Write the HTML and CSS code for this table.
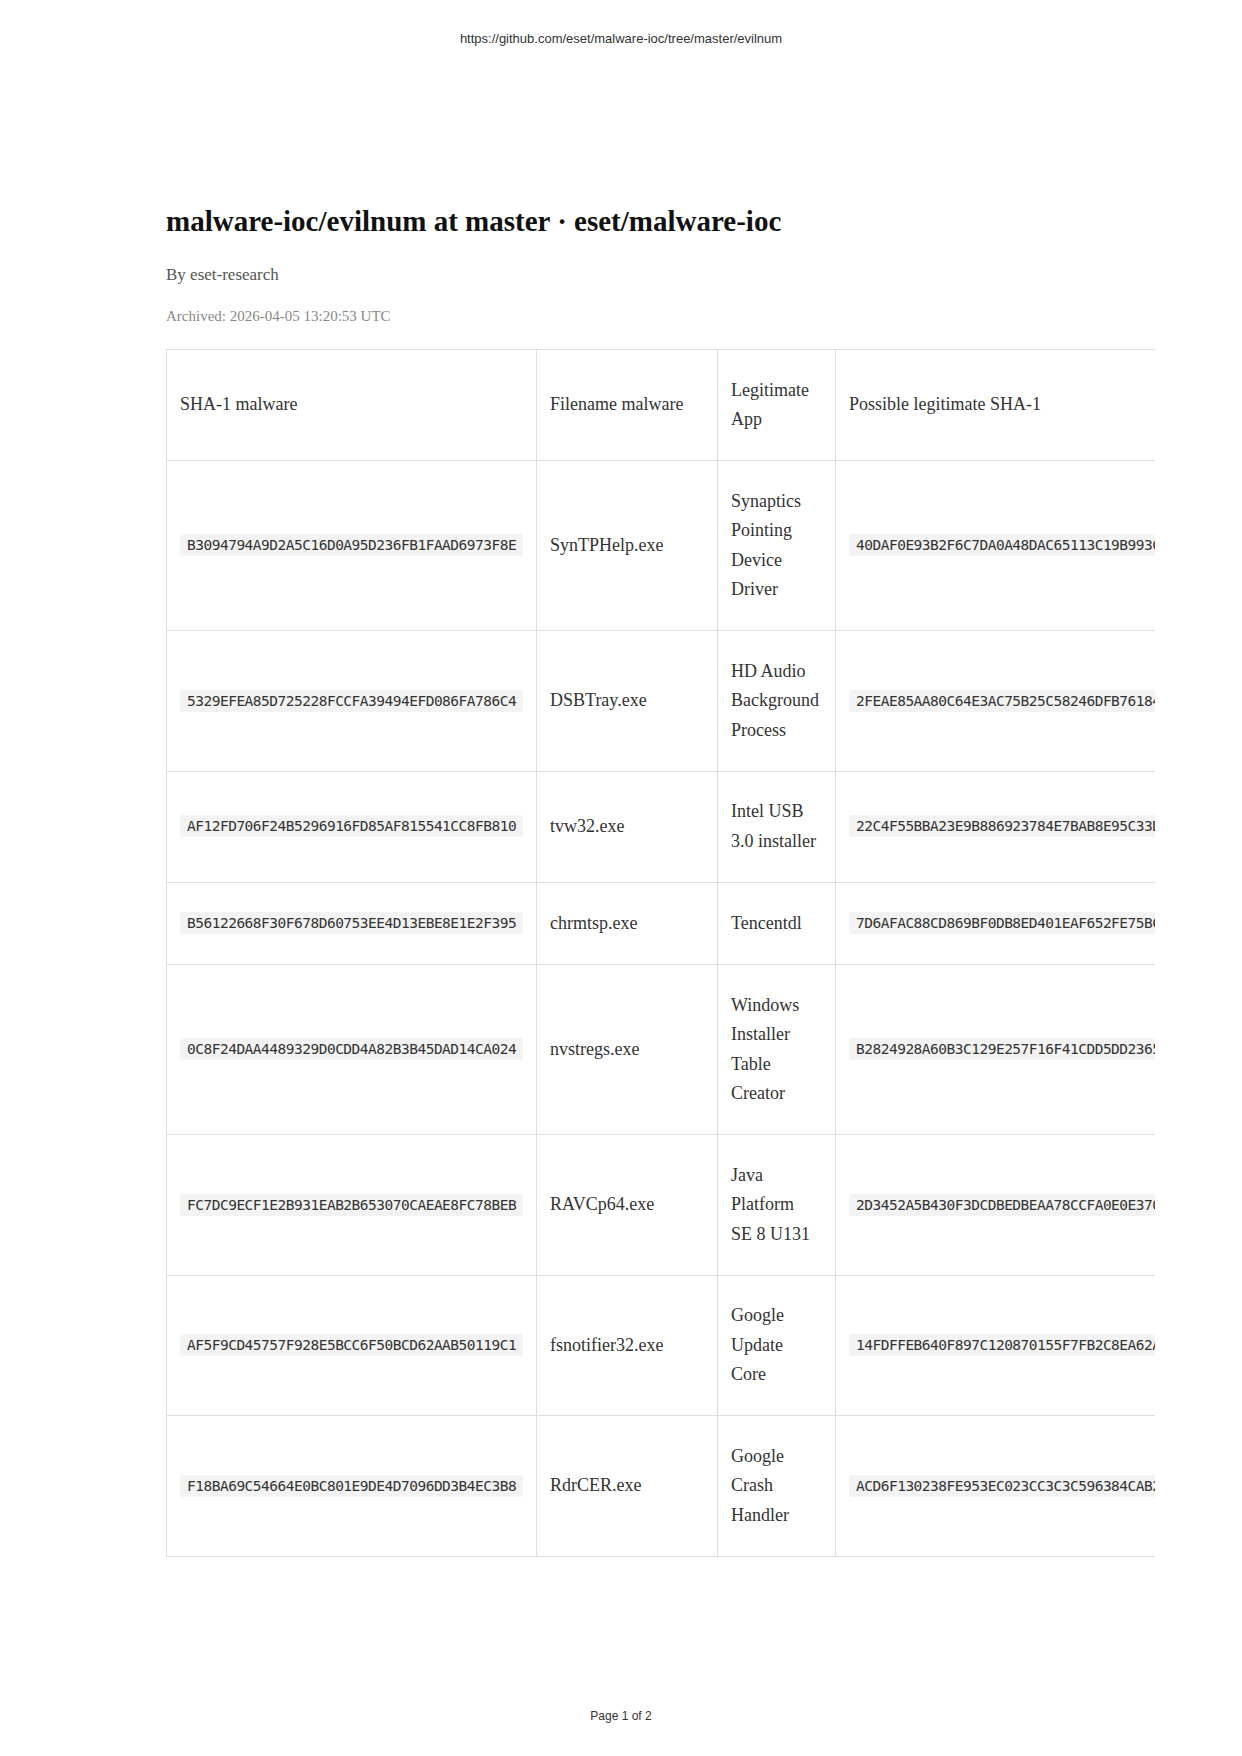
FILE: index.html
```html
<!DOCTYPE html>
<html lang="en">
<head>
<meta charset="utf-8">
<title>malware-ioc/evilnum at master · eset/malware-ioc</title>
<link rel="stylesheet" href="styles.css">
</head>
<body>
<header class="print-header">https://github.com/eset/malware-ioc/tree/master/evilnum</header>
<main class="content">
  <h1 class="title">malware-ioc/evilnum at master · eset/malware-ioc</h1>
  <p class="byline">By eset-research</p>
  <p class="archived">Archived: 2026-04-05 13:20:53 UTC</p>
  <div class="table-clip">
    <table class="ioc-table">
      <colgroup>
        <col class="c1"><col class="c2"><col class="c3"><col class="c4">
      </colgroup>
      <thead>
        <tr><th>SHA-1 malware</th><th>Filename malware</th><th class="app">Legitimate App</th><th>Possible legitimate SHA-1</th></tr>
      </thead>
      <tbody>
        <tr><td><code>B3094794A9D2A5C16D0A95D236FB1FAAD6973F8E</code></td><td>SynTPHelp.exe</td><td class="app">Synaptics Pointing Device Driver</td><td><code>40DAF0E93B2F6C7DA0A48DAC65113C19B993C0A1</code></td></tr>
        <tr><td><code>5329EFEA85D725228FCCFA39494EFD086FA786C4</code></td><td>DSBTray.exe</td><td class="app">HD Audio Background Process</td><td><code>2FEAE85AA80C64E3AC75B25C58246DFB76184E37</code></td></tr>
        <tr><td><code>AF12FD706F24B5296916FD85AF815541CC8FB810</code></td><td>tvw32.exe</td><td class="app">Intel USB 3.0 installer</td><td><code>22C4F55BBA23E9B886923784E7BAB8E95C33D5C1</code></td></tr>
        <tr><td><code>B56122668F30F678D60753EE4D13EBE8E1E2F395</code></td><td>chrmtsp.exe</td><td class="app">Tencentdl</td><td><code>7D6AFAC88CD869BF0DB8ED401EAF652FE75BC9F2</code></td></tr>
        <tr><td><code>0C8F24DAA4489329D0CDD4A82B3B45DAD14CA024</code></td><td>nvstregs.exe</td><td class="app">Windows Installer Table Creator</td><td><code>B2824928A60B3C129E257F16F41CDD5DD2365A07</code></td></tr>
        <tr><td><code>FC7DC9ECF1E2B931EAB2B653070CAEAE8FC78BEB</code></td><td>RAVCp64.exe</td><td class="app">Java Platform SE 8 U131</td><td><code>2D3452A5B430F3DCDBEDBEAA78CCFA0E0E370B4D</code></td></tr>
        <tr><td><code>AF5F9CD45757F928E5BCC6F50BCD62AAB50119C1</code></td><td>fsnotifier32.exe</td><td class="app">Google Update Core</td><td><code>14FDFFEB640F897C120870155F7FB2C8EA62A3E6</code></td></tr>
        <tr><td><code>F18BA69C54664E0BC801E9DE4D7096DD3B4EC3B8</code></td><td>RdrCER.exe</td><td class="app">Google Crash Handler</td><td><code>ACD6F130238FE953EC023CC3C3C596384CAB2F90</code></td></tr>
      </tbody>
    </table>
  </div>
</main>
<footer class="print-footer">Page 1 of 2</footer>
</body>
</html>
```
FILE: styles.css
```css
html, body {
  margin: 0;
  padding: 0;
  background: #fff;
}
body {
  min-height: 1756px;
  display: flex;
  flex-direction: column;
  font-family: "Liberation Serif", "Times New Roman", serif;
  color: #333;
}
.print-header {
  padding-top: 31px;
  text-align: center;
  font-family: "Liberation Sans", Arial, sans-serif;
  font-size: 13px;
  line-height: 16px;
  color: #333;
}
.content {
  padding-left: 166px;
  padding-top: 157px;
}
.title {
  margin: 0;
  font-size: 29px;
  line-height: 34px;
  font-weight: bold;
  color: #111;
}
.byline {
  margin: 25px 0 0;
  font-size: 17px;
  line-height: 24px;
  color: #555;
}
.archived {
  margin: 19px 0 0;
  font-size: 15px;
  line-height: 20px;
  color: #888;
}
.table-clip {
  margin-top: 23px;
  width: 989px;
  overflow: hidden;
}
.ioc-table {
  border-collapse: collapse;
  table-layout: fixed;
  width: 1170px;
  font-size: 18px;
  line-height: 29.5px;
}
.c1 { width: 370px; }
.c2 { width: 181px; }
.c3 { width: 118px; }
.c4 { width: 501px; }
.ioc-table th,
.ioc-table td {
  border: 1px solid #dedede;
  padding: 25.5px 13px;
  text-align: left;
  vertical-align: middle;
  font-weight: normal;
  color: #333;
}
.ioc-table .app {
  padding-right: 15.8px;
}
.ioc-table code {
  font-family: "DejaVu Sans Mono", "Liberation Mono", monospace;
  font-size: 14.5px;
  letter-spacing: -0.5px;
  background: #f3f3f3;
  border-radius: 3px;
  padding: 3px 7px;
  white-space: nowrap;
  color: #333;
}
.print-footer {
  margin-top: auto;
  padding-bottom: 32px;
  text-align: center;
  font-family: "Liberation Sans", Arial, sans-serif;
  font-size: 12px;
  line-height: 16px;
  color: #333;
}
```
